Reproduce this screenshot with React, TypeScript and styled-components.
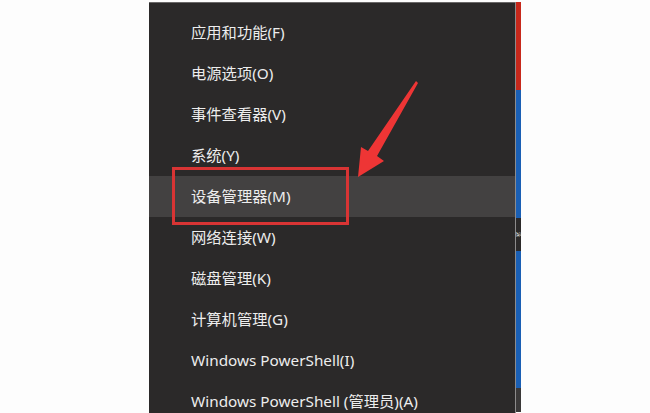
import { createGlobalStyle, styled } from "styled-components"

const items = [
  "应用和功能(F)",
  "电源选项(O)",
  "事件查看器(V)",
  "系统(Y)",
  "设备管理器(M)",
  "网络连接(W)",
  "磁盘管理(K)",
  "计算机管理(G)",
  "Windows PowerShell(I)",
  "Windows PowerShell (管理员)(A)",
]

const ACTIVE = 4

const App = () => {
  return (
    <>
      <GlobalStyle />
      <Page>
        <Menu>
          {items.map((label, i) => (
            <MenuItem key={label} $active={i === ACTIVE}>
              {label}
            </MenuItem>
          ))}
          <Callout />
          <Arrow viewBox="0 0 80 110" aria-hidden="true">
            <polygon points="69,3 71,5 30,78 37,83 11,99 14,69 21,73" fill="#ee3535" />
          </Arrow>
        </Menu>
        <Edge>
          <EdgeLine />
          <Strip>
            <StripPart $color="#c7281b" $height={88} />
            <StripPart $color="#1a5fb4" $height={128} />
            <StripPart $color="#2b2929" $height={33}>
              <Glyph>泳</Glyph>
            </StripPart>
            <StripPart $color="#1a5fb4" $height={137} />
            <StripPart $color="#3a3838" $height={24} />
          </Strip>
        </Edge>
      </Page>
    </>
  )
}

const GlobalStyle = createGlobalStyle`
  html, body {
    margin: 0;
    padding: 0;
    background: #fdfdfd;
  }
  body {
    font-family: "Noto Sans", "Noto Sans CJK SC", sans-serif;
  }
`

const Page = styled.div`
  display: flex;
  flex-direction: row;
  align-items: stretch;
  height: 413px;
  padding: 2px 0 0 149px;
  box-sizing: border-box;
  overflow: hidden;
`

const Menu = styled.div`
  position: relative;
  width: 366px;
  background: #2b2929;
  border-top: 1px solid #6a6868;
  padding-top: 9px;
  box-sizing: border-box;
  display: flex;
  flex-direction: column;
`

const MenuItem = styled.div<{ $active?: boolean }>`
  height: 41px;
  line-height: 41px;
  padding-left: 42px;
  font-size: 15.3px;
  color: #ededed;
  white-space: nowrap;
  background: ${(p) => (p.$active ? "#434141" : "transparent")};
`

const Callout = styled.div`
  position: absolute;
  left: 23px;
  top: 164px;
  width: 177px;
  height: 58px;
  border: 3px solid #d83434;
  box-sizing: border-box;
`

const Arrow = styled.svg`
  position: absolute;
  left: 198px;
  top: 75px;
  width: 80px;
  height: 110px;
`

const Edge = styled.div`
  display: flex;
  flex-direction: row;
`

const EdgeLine = styled.div`
  width: 1px;
  background: #8d8b8b;
`

const Strip = styled.div`
  width: 5px;
  display: flex;
  flex-direction: column;
`

const StripPart = styled.div<{ $color: string; $height: number }>`
  height: ${(p) => p.$height}px;
  flex-shrink: 0;
  background: ${(p) => p.$color};
  display: flex;
  align-items: center;
  justify-content: center;
`

const Glyph = styled.span`
  font-size: 5px;
  line-height: 5px;
  color: #f0f0f0;
  transform: rotate(90deg);
`

export default App
